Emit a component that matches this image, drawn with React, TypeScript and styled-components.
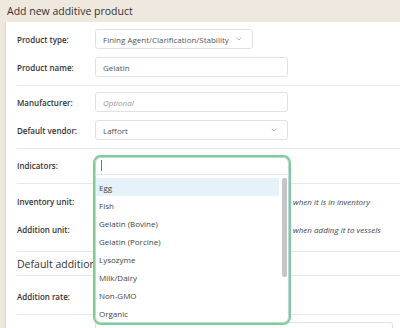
import * as React from 'react';
import styled, { createGlobalStyle } from 'styled-components';
import { ChevronDown } from 'lucide-react';

const GlobalStyle = createGlobalStyle`
	html, body {
		margin: 0;
		padding: 0;
		background: #efe8de;
		font-family: 'Open Sans', 'Liberation Sans', sans-serif;
		color: #333;
	}
`;

const indicators = [
	'Egg',
	'Fish',
	'Gelatin (Bovine)',
	'Gelatin (Porcine)',
	'Lysozyme',
	'Milk/Dairy',
	'Non-GMO',
	'Organic'
];

const Select = ({ value, width }: { value: string; width: number }) => (
	<InputBox width={width}>
		<InputText>{value}</InputText>
		<ChevronDown size={8} color='#777' strokeWidth={1.5} />
	</InputBox>
);

const IndicatorDropdown = () => (
	<Dropdown>
		<SearchArea>
			<Caret />
		</SearchArea>
		<OptionList>
			<Options>
				{indicators.map((name, i) => (
					<Option key={name} active={i === 0}>
						{name}
					</Option>
				))}
			</Options>
			<ScrollTrack>
				<ScrollThumb />
			</ScrollTrack>
		</OptionList>
	</Dropdown>
);

export default function App() {
	return (
		<Page>
			<GlobalStyle />
			<Header>Add new additive product</Header>
			<Card>
				<Section top={3} bottom={4}>
					<Row>
						<Label>Product type:</Label>
						<Select value='Fining Agent/Clarification/Stability' width={158} />
					</Row>
					<Row>
						<Label>Product name:</Label>
						<InputBox width={193}>
							<InputText>Gelatin</InputText>
						</InputBox>
					</Row>
				</Section>
				<Section top={2} bottom={4}>
					<Row>
						<Label>Manufacturer:</Label>
						<InputBox width={193}>
							<Placeholder>Optional</Placeholder>
						</InputBox>
					</Row>
					<Row>
						<Label>Default vendor:</Label>
						<Select value='Laffort' width={193} />
					</Row>
				</Section>
				<Section top={2} bottom={4}>
					<Row>
						<Label>Indicators:</Label>
						<Field>
							<InputBox width={193} />
							<IndicatorDropdown />
						</Field>
					</Row>
				</Section>
				<Section top={3} bottom={8}>
					<Row>
						<Label>Inventory unit:</Label>
						<Select value='' width={193} />
						<Hint>when it is in inventory</Hint>
					</Row>
					<Row>
						<Label>Addition unit:</Label>
						<Select value='' width={193} />
						<Hint>when adding it to vessels</Hint>
					</Row>
				</Section>
				<Section top={1} bottom={0}>
					<Heading>Default addition</Heading>
				</Section>
				<Section top={6} bottom={4}>
					<Row>
						<Label>Addition rate:</Label>
						<InputBox width={193} />
					</Row>
				</Section>
				<LastRow>
					<InputBox width={298} />
				</LastRow>
			</Card>
		</Page>
	);
}

const Page = styled.div`
	width: 400px;
	height: 328px;
	overflow: hidden;
	display: flex;
	flex-direction: column;
`;

const Header = styled.div`
	flex-shrink: 0;
	height: 22px;
	padding-left: 7px;
	display: flex;
	align-items: center;
	font-size: 10.5px;
	color: #333;
	background: #efe8de;
`;

const Card = styled.div`
	flex: 1 0 auto;
	margin-left: 5px;
	padding-left: 11px;
	background: #fff;
	border-left: 1px solid #ddd6cb;
`;

const Section = styled.div<{ top: number; bottom: number }>`
	padding: ${p => `${p.top}px 0 ${p.bottom}px`};
	border-bottom: 1px solid #e9e9e9;
`;

const Row = styled.div`
	height: 28px;
	display: flex;
	align-items: center;
`;

const LastRow = styled.div`
	padding: 7px 0 0 78px;
`;

const Label = styled.div`
	width: 78px;
	flex-shrink: 0;
	font-size: 8px;
	font-weight: 600;
	color: #333;
`;

const Field = styled.div`
	position: relative;
	display: flex;
	align-items: center;
`;

const InputBox = styled.div<{ width: number }>`
	box-sizing: border-box;
	width: ${p => p.width}px;
	height: 20px;
	padding: 0 9px 0 7px;
	display: flex;
	align-items: center;
	justify-content: space-between;
	border: 1px solid #e1e1e1;
	border-radius: 3px;
	background: #fff;
`;

const InputText = styled.span`
	font-size: 8px;
	color: #555;
	white-space: nowrap;
`;

const Placeholder = styled.span`
	font-size: 8px;
	font-style: italic;
	color: #9a9a9a;
`;

const Hint = styled.span`
	margin-left: 5px;
	font-size: 8px;
	font-style: italic;
	color: #444;
	white-space: nowrap;
`;

const Heading = styled.div`
	height: 22px;
	display: flex;
	align-items: center;
	font-size: 10.5px;
	color: #333;
`;

const Dropdown = styled.div`
	position: absolute;
	left: -2px;
	top: 0;
	width: 198px;
	height: 170px;
	box-sizing: border-box;
	border: 2px solid #7fcd8e;
	border-radius: 8px;
	box-shadow: inset 0 0 0 1px #bcd6ec;
	background: #fff;
	overflow: hidden;
	z-index: 2;
`;

const SearchArea = styled.div`
	height: 17px;
	padding-left: 6px;
	display: flex;
	align-items: center;
	border-bottom: 1px solid #e6e6e6;
`;

const Caret = styled.div`
	width: 1px;
	height: 11px;
	background: #777;
`;

const OptionList = styled.div`
	display: flex;
	padding: 3px 0 0 1px;
`;

const Options = styled.div`
	width: 183px;
`;

const Option = styled.div<{ active: boolean }>`
	height: 18px;
	padding-left: 3px;
	display: flex;
	align-items: center;
	font-size: 8px;
	color: #444;
	background: ${p => (p.active ? '#e5f2f9' : 'transparent')};
`;

const ScrollTrack = styled.div`
	margin-left: 3px;
	width: 5px;
`;

const ScrollThumb = styled.div`
	height: 99px;
	border-radius: 2px;
	background: #c5c5c5;
`;
